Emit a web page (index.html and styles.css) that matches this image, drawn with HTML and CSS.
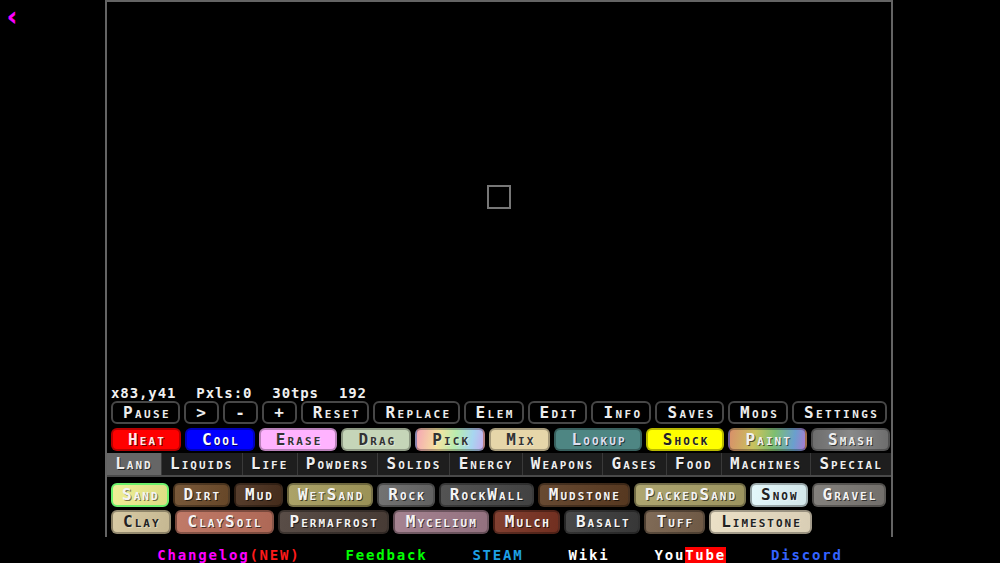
FILE: index.html
```html
<!DOCTYPE html>
<html lang="en">
<head>
  <meta charset="UTF-8" />
  <title>Sandboxels</title>
  <link rel="stylesheet" href="styles.css">
</head>
<body>
  <a class="back" href="#">‹</a>
  <div class="game">
    <div class="canvas">
      <div class="cursor-box"></div>
    </div>
    <div class="stats">
      <span>x83,y41</span>
      <span>Pxls:0</span>
      <span>30tps</span>
      <span>192</span>
    </div>
    <div class="row controls">
      <span class="btn ctl">Pause</span>
      <span class="btn ctl">&gt;</span>
      <span class="btn ctl">-</span>
      <span class="btn ctl">+</span>
      <span class="btn ctl">Reset</span>
      <span class="btn ctl">Replace</span>
      <span class="btn ctl">Elem</span>
      <span class="btn ctl">Edit</span>
      <span class="btn ctl">Info</span>
      <span class="btn ctl">Saves</span>
      <span class="btn ctl">Mods</span>
      <span class="btn ctl">Settings</span>
    </div>
    <div class="row tools">
      <span class="btn tool heat">Heat</span>
      <span class="btn tool cool">Cool</span>
      <span class="btn tool erase">Erase</span>
      <span class="btn tool drag">Drag</span>
      <span class="btn tool pick">Pick</span>
      <span class="btn tool mix">Mix</span>
      <span class="btn tool lookup">Lookup</span>
      <span class="btn tool shock">Shock</span>
      <span class="btn tool paint">Paint</span>
      <span class="btn tool smash">Smash</span>
    </div>
    <div class="cats">
      <span class="cat on">Land</span>
      <span class="cat">Liquids</span>
      <span class="cat">Life</span>
      <span class="cat">Powders</span>
      <span class="cat">Solids</span>
      <span class="cat">Energy</span>
      <span class="cat">Weapons</span>
      <span class="cat">Gases</span>
      <span class="cat">Food</span>
      <span class="cat">Machines</span>
      <span class="cat">Special</span>
    </div>
    <div class="elems">
      <span class="btn el sand on">Sand</span>
      <span class="btn el dirt">Dirt</span>
      <span class="btn el mud">Mud</span>
      <span class="btn el wetsand">WetSand</span>
      <span class="btn el rock">Rock</span>
      <span class="btn el rockwall">RockWall</span>
      <span class="btn el mudstone">Mudstone</span>
      <span class="btn el packedsand">PackedSand</span>
      <span class="btn el snow">Snow</span>
      <span class="btn el gravel">Gravel</span>
      <span class="btn el clay">Clay</span>
      <span class="btn el claysoil">ClaySoil</span>
      <span class="btn el permafrost">Permafrost</span>
      <span class="btn el mycelium">Mycelium</span>
      <span class="btn el mulch">Mulch</span>
      <span class="btn el basalt">Basalt</span>
      <span class="btn el tuff">Tuff</span>
      <span class="btn el limestone">Limestone</span>
    </div>
  </div>
  <div class="links">
    <a href="#" class="changelog">Changelog<span class="new">(NEW)</span></a>
    <a href="#" class="feedback">Feedback</a>
    <a href="#" class="steam">STEAM</a>
    <a href="#" class="wiki">Wiki</a>
    <a href="#" class="youtube">You<span class="tube">Tube</span></a>
    <a href="#" class="discord">Discord</a>
  </div>
</body>
</html>
```
FILE: styles.css
```css
html, body {
  margin: 0;
  padding: 0;
  background: #000;
  color: #eee;
  font-family: "DejaVu Sans Mono", "Liberation Mono", monospace;
  font-weight: bold;
}
.back {
  position: absolute;
  left: 7px;
  top: 3px;
  color: #ff00ff;
  font-family: "DejaVu Sans", sans-serif;
  font-size: 24px;
  text-decoration: none;
  -webkit-text-stroke: 0.6px #ff00ff;
}
.game {
  width: 784px;
  margin: 0 auto;
  border: 2px solid #646464;
  border-bottom: none;
  position: relative;
  left: -1px;
}
.canvas {
  height: 384px;
  position: relative;
  background: #000;
}
.cursor-box {
  position: absolute;
  left: 380px;
  top: 183px;
  width: 20px;
  height: 20px;
  border: 2px solid #777;
}
.stats {
  display: flex;
  gap: 20px;
  height: 15px;
  padding-left: 4px;
  font-size: 14px;
  line-height: 15px;
  letter-spacing: 0.9px;
  color: #f0f0f0;
}
.row {
  display: flex;
  gap: 4px;
  padding: 0 4px;
}
.btn {
  box-sizing: border-box;
  height: 23px;
  border: 2px solid;
  border-radius: 6px;
  font-size: 16px;
  font-variant: small-caps;
  letter-spacing: 2.4px;
  line-height: 19px;
  text-align: center;
  white-space: nowrap;
  text-shadow: 1px 1px 0 rgba(0,0,0,0.6);
}
.ctl {
  min-width: 35px;
  padding: 0 8px 0 10px;
  background: #000;
  border-color: #474747;
  color: #ececec;
}
.tools {
  margin-top: 4px;
}
.tool {
  padding: 0 13px 0 15px;
  letter-spacing: 2.1px;
  border-color: rgba(0,0,0,0.28);
  color: #fff;
}
.heat { background: #ff0000; color: #ffe8e8; }
.cool { background: #0000ff; }
.erase { background: #ffb3ff; color: #333; text-shadow: 1px 1px 0 rgba(255,255,255,0.4); }
.drag { background: #c5d5b8; color: #333; text-shadow: 1px 1px 0 rgba(255,255,255,0.4); }
.pick {
  background: linear-gradient(100deg, #f5a7b4 0%, #f6e3a0 32%, #b8ecb0 58%, #a7d6f0 82%, #c6aff0 100%);
  color: #333;
  text-shadow: 1px 1px 0 rgba(255,255,255,0.4);
}
.mix { background: #e6d6a9; color: #333; text-shadow: 1px 1px 0 rgba(255,255,255,0.4); }
.lookup { background: #4e8683; color: #dde; }
.shock { background: #ffff00; color: #222; text-shadow: 1px 1px 0 rgba(255,255,255,0.4); }
.paint {
  background: linear-gradient(100deg, #d8906a 0%, #c8c25e 33%, #7dbe72 58%, #6a9fce 84%, #a77bd0 100%);
  color: #f0f0f0;
}
.smash { background: linear-gradient(90deg, #6e6e6e, #888 50%, #6e6e6e); color: #eee; }
.cats {
  display: flex;
  margin-top: 2px;
  height: 22px;
  background: #1e1e1e;
}
.cat {
  flex: 1 1 auto;
  padding: 0 7px;
  border-left: 1px solid #3a3a3a;
  font-size: 16px;
  font-variant: small-caps;
  letter-spacing: 2px;
  line-height: 22px;
  text-align: center;
  color: #eee;
  text-shadow: 1px 1px 0 rgba(0,0,0,0.6);
}
.cat:first-child {
  border-left: none;
}
.cat.on {
  background: #666;
}
.elems {
  display: flex;
  flex-wrap: wrap;
  gap: 3px 4px;
  padding: 6px 0 3px 4px;
  border-top: 2px solid #4a4a4a;
}
.el {
  height: 24px;
  line-height: 20px;
  padding: 0 7px 0 9px;
  letter-spacing: 2px;
  border-color: rgba(0,0,0,0.3);
  color: #f4f4f4;
  background-image: linear-gradient(100deg, rgba(255,255,255,0.07), rgba(0,0,0,0.07));
}
.el.on { border-color: #6cf06c; }
.sand { background-color: #eeee8e; text-shadow: 1px 1px 0 rgba(0,0,0,0.5); }
.dirt { background-color: #6f4c2b; }
.mud { background-color: #4a2f1d; }
.wetsand { background-color: #a69c5c; }
.rock { background-color: #686868; }
.rockwall { background-color: #474747; }
.mudstone { background-color: #5c3c22; }
.packedsand { background-color: #a89f66; }
.snow { background-color: #e2f7fb; color: #222; text-shadow: 1px 1px 0 rgba(255,255,255,0.4); }
.gravel { background-color: #7b7773; }
.clay { background-color: #d5c69d; color: #222; text-shadow: 1px 1px 0 rgba(255,255,255,0.4); padding: 0 8px 0 10px; }
.claysoil { background-color: #bb705c; padding: 0 9px 0 11px; }
.permafrost { background-color: #4c4039; padding: 0 8px 0 10px; }
.mycelium { background-color: #9e7a89; padding: 0 9px 0 11px; }
.mulch { background-color: #7a3322; padding: 0 7px 0 10px; }
.basalt { background-color: #3b3b3b; padding: 0 7px 0 10px; }
.tuff { background-color: #76604a; padding: 0 9px 0 11px; }
.limestone { background-color: #e9dec3; color: #222; text-shadow: 1px 1px 0 rgba(255,255,255,0.4); padding: 0 8px 0 10px; }
.links {
  display: flex;
  justify-content: center;
  gap: 45px;
  margin-top: 11px;
  font-size: 14px;
  line-height: 15px;
  letter-spacing: 1.8px;
}
.links a {
  text-decoration: none;
}
.changelog { color: #ff00ff; }
.new { color: #ff1a1a; }
.feedback { color: #00ff00; }
.steam { color: #1ea0e6; }
.wiki { color: #fff; }
.youtube { color: #fff; }
.tube { background: #ff0000; }
.discord { color: #3463ff; }
```
